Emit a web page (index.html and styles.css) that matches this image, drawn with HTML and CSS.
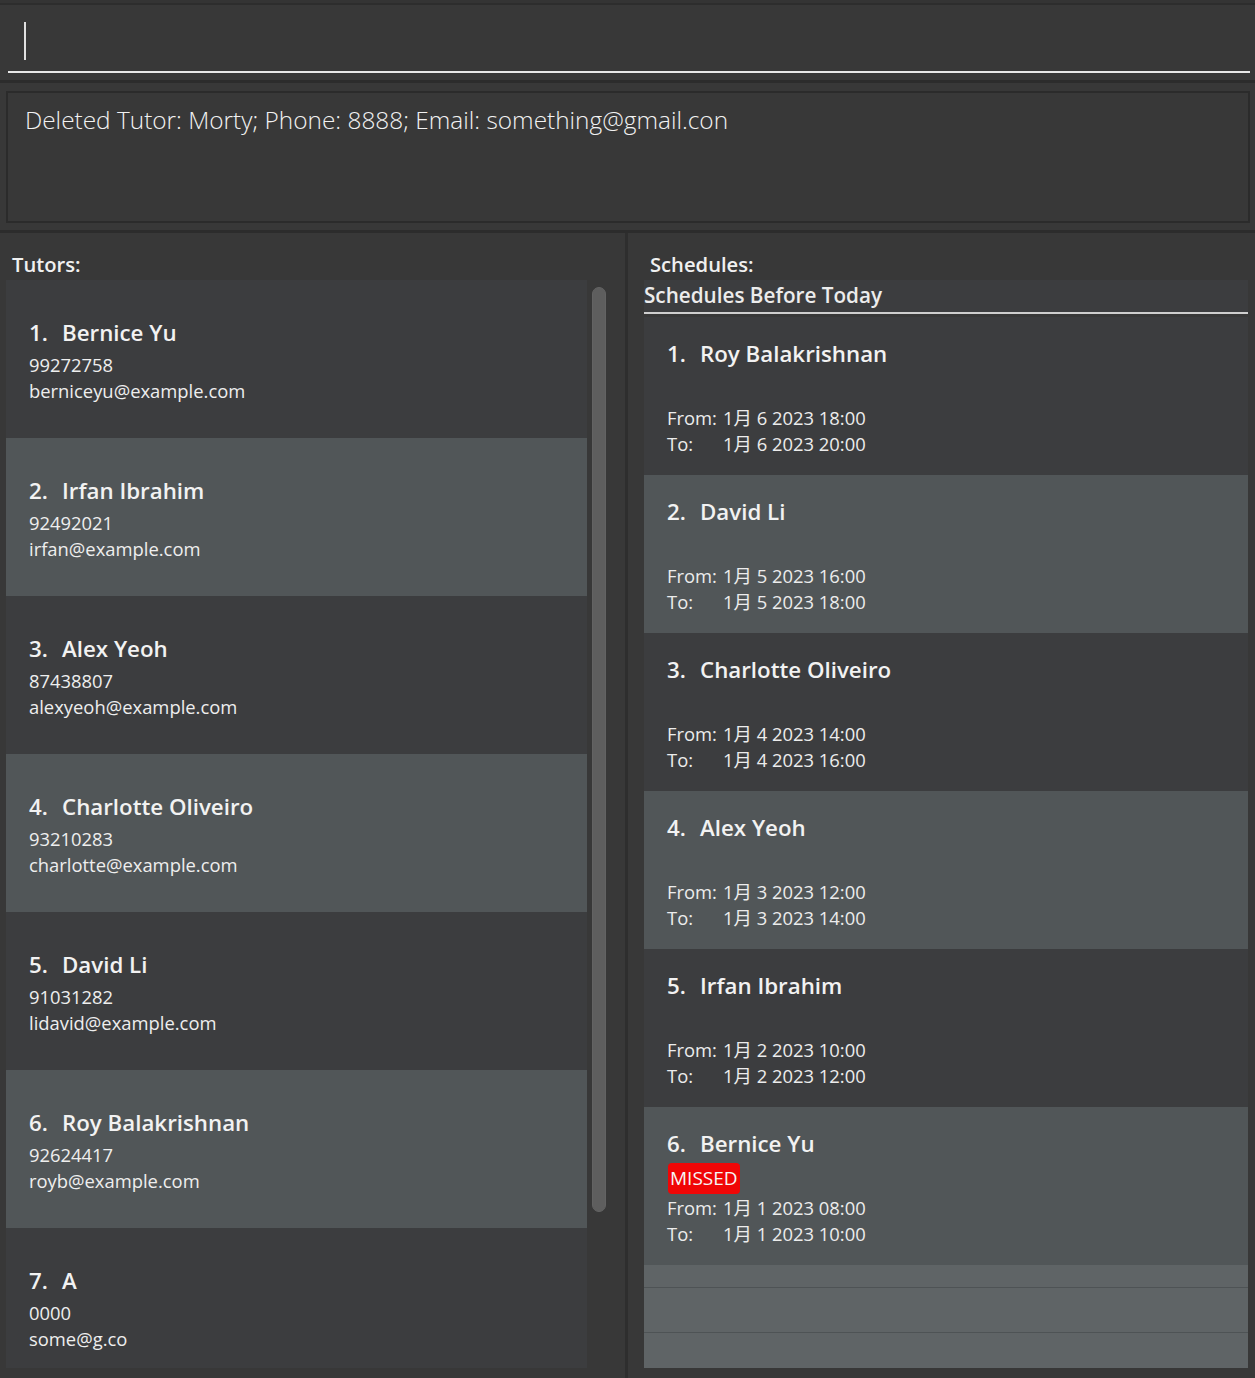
FILE: index.html
```html
<!DOCTYPE html>
<html>
<head>
<meta charset="utf-8">
<link rel="stylesheet" href="styles.css">
</head>
<body>
<div class="app">
  <div class="top-strip"></div>
  <div class="command">
    <div class="command-input"><span class="caret"></span></div>
  </div>
  <div class="sep"></div>
  <div class="result-wrap">
    <div class="result">Deleted Tutor: Morty; Phone: 8888; Email: something@gmail.con</div>
  </div>
  <div class="sep"></div>
  <div class="panes">
    <section class="pane pane-left">
      <div class="pane-title">Tutors:</div>
      <div class="list-area">
        <div class="list">
          <div class="card odd"><div class="card-body"><div class="name"><span class="idx">1.</span>Bernice Yu</div><div class="line">99272758</div><div class="line">berniceyu@example.com</div></div></div>
          <div class="card even"><div class="card-body"><div class="name"><span class="idx">2.</span>Irfan Ibrahim</div><div class="line">92492021</div><div class="line">irfan@example.com</div></div></div>
          <div class="card odd"><div class="card-body"><div class="name"><span class="idx">3.</span>Alex Yeoh</div><div class="line">87438807</div><div class="line">alexyeoh@example.com</div></div></div>
          <div class="card even"><div class="card-body"><div class="name"><span class="idx">4.</span>Charlotte Oliveiro</div><div class="line">93210283</div><div class="line">charlotte@example.com</div></div></div>
          <div class="card odd"><div class="card-body"><div class="name"><span class="idx">5.</span>David Li</div><div class="line">91031282</div><div class="line">lidavid@example.com</div></div></div>
          <div class="card even"><div class="card-body"><div class="name"><span class="idx">6.</span>Roy Balakrishnan</div><div class="line">92624417</div><div class="line">royb@example.com</div></div></div>
          <div class="card odd"><div class="card-body"><div class="name"><span class="idx">7.</span>A</div><div class="line">0000</div><div class="line">some@g.co</div></div></div>
        </div>
        <div class="scrolltrack"><div class="thumb"></div></div>
      </div>
    </section>
    <div class="vdivider"></div>
    <section class="pane pane-right">
      <div class="pane-title right-title">Schedules:</div>
      <div class="sched-list">
        <div class="tab-head">Schedules Before Today</div>
        <div class="scard odd"><div class="sname"><span class="sidx">1.</span>Roy Balakrishnan</div><div class="status"></div><div class="time"><span class="tl">From:</span>1月 6 2023 18:00</div><div class="time"><span class="tl">To:</span>1月 6 2023 20:00</div></div>
        <div class="scard even"><div class="sname"><span class="sidx">2.</span>David Li</div><div class="status"></div><div class="time"><span class="tl">From:</span>1月 5 2023 16:00</div><div class="time"><span class="tl">To:</span>1月 5 2023 18:00</div></div>
        <div class="scard odd"><div class="sname"><span class="sidx">3.</span>Charlotte Oliveiro</div><div class="status"></div><div class="time"><span class="tl">From:</span>1月 4 2023 14:00</div><div class="time"><span class="tl">To:</span>1月 4 2023 16:00</div></div>
        <div class="scard even"><div class="sname"><span class="sidx">4.</span>Alex Yeoh</div><div class="status"></div><div class="time"><span class="tl">From:</span>1月 3 2023 12:00</div><div class="time"><span class="tl">To:</span>1月 3 2023 14:00</div></div>
        <div class="scard odd"><div class="sname"><span class="sidx">5.</span>Irfan Ibrahim</div><div class="status"></div><div class="time"><span class="tl">From:</span>1月 2 2023 10:00</div><div class="time"><span class="tl">To:</span>1月 2 2023 12:00</div></div>
        <div class="scard even"><div class="sname"><span class="sidx">6.</span>Bernice Yu</div><div class="status"><span class="missed">MISSED</span></div><div class="time"><span class="tl">From:</span>1月 1 2023 08:00</div><div class="time"><span class="tl">To:</span>1月 1 2023 10:00</div></div>
        <div class="empty-row r1"></div>
        <div class="empty-row r2"></div>
        <div class="empty-row r3"></div>
      </div>
    </section>
  </div>
</div>
</body>
</html>
```
FILE: styles.css
```css
* { box-sizing: border-box; }
html, body { margin: 0; padding: 0; }
body {
  background: #383838;
  font-family: "Open Sans", "Noto Sans CJK JP", sans-serif;
  color: #eeeeee;
  width: 1255px;
  height: 1378px;
  overflow: hidden;
}
.app { display: flex; flex-direction: column; height: 1378px; }
.top-strip { height: 5px; background: #343434; border-bottom: 2px solid #2d2d2d; }
.command { height: 75px; padding: 0 5px 0 8px; }
.command-input {
  height: 68px;
  border-bottom: 2px solid #e8e8e8;
  padding: 17px 0 0 16px;
}
.caret { display: block; width: 2px; height: 38px; background: #e0e0e0; }
.sep { height: 3px; background: #2c2c2c; }
.result-wrap { padding: 8px 5px 7px 6px; }
.result {
  height: 132px;
  border: 2px solid #2b2b2b;
  padding: 10px 0 0 17px;
  font-weight: 300;
  font-size: 24.4px;
  color: #f2f2f2;
}
.panes { flex: 1; display: flex; min-height: 0; }
.pane { display: flex; flex-direction: column; }
.pane-left { width: 625px; }
.vdivider { width: 3px; background: #2e2e2e; }
.pane-right { flex: 1; }
.pane-title {
  height: 47px;
  padding: 17px 0 0 12px;
  font-weight: 600;
  font-size: 20.2px;
  color: #f0f0f0;
  flex-shrink: 0;
}
.right-title { padding-left: 22px; }
.list-area { display: flex; height: 1088px; padding-left: 6px; flex-shrink: 0; }
.list { width: 581px; display: flex; flex-direction: column; overflow: hidden; }
.card { height: 158px; display: flex; align-items: center; padding-left: 23px; flex-shrink: 0; }
.odd { background: #3c3d3f; }
.even { background: #515658; }
.card-body { padding-top: 4px; }
.name {
  font-weight: 600;
  font-size: 22.3px;
  line-height: 30px;
  margin-bottom: 4px;
  color: #f2f2f2;
}
.idx { display: inline-block; width: 33px; }
.line { font-size: 18.4px; line-height: 26px; color: #eeeeee; }
.scrolltrack { width: 25px; padding: 7px 0 0 5px; }
.thumb {
  width: 14px; height: 925px;
  background: #5e5e5e;
  border: 1px solid #636363;
  border-radius: 7px;
}
.sched-list {
  margin: 0 7px 10px 16px;
  display: flex; flex-direction: column;
  flex: 1;
}
.tab-head {
  background: #3c3d3f;
  height: 34px;
  font-weight: 600;
  font-size: 20.7px;
  color: #ececec;
  border-bottom: 2px solid #cfcfcf;
  line-height: 30px;
  margin-bottom: 3px;
  flex-shrink: 0;
  white-space: nowrap;
}
.scard { height: 158px; padding: 22px 0 0 23px; flex-shrink: 0; }
.sname {
  font-weight: 600;
  font-size: 22.3px;
  line-height: 30px;
  color: #f2f2f2;
}
.sidx { display: inline-block; width: 33px; }
.status { height: 36px; padding-top: 4px; }
.missed {
  display: inline-block;
  background: #f00606;
  color: #f6f6f6;
  font-size: 19px;
  line-height: 31px;
  padding: 0 2px;
  border-radius: 4px;
  margin-left: 1px;
}
.time { font-size: 18.4px; line-height: 26px; color: #ececec; }
.tl { display: inline-block; width: 56px; }
.empty-row { background: #5f6466; flex-shrink: 0; }
.r1 { height: 22px; }
.r2 { height: 45px; border-top: 1px solid #4e5355; }
.r3 { flex: 1; border-top: 1px solid #4e5355; }
```
